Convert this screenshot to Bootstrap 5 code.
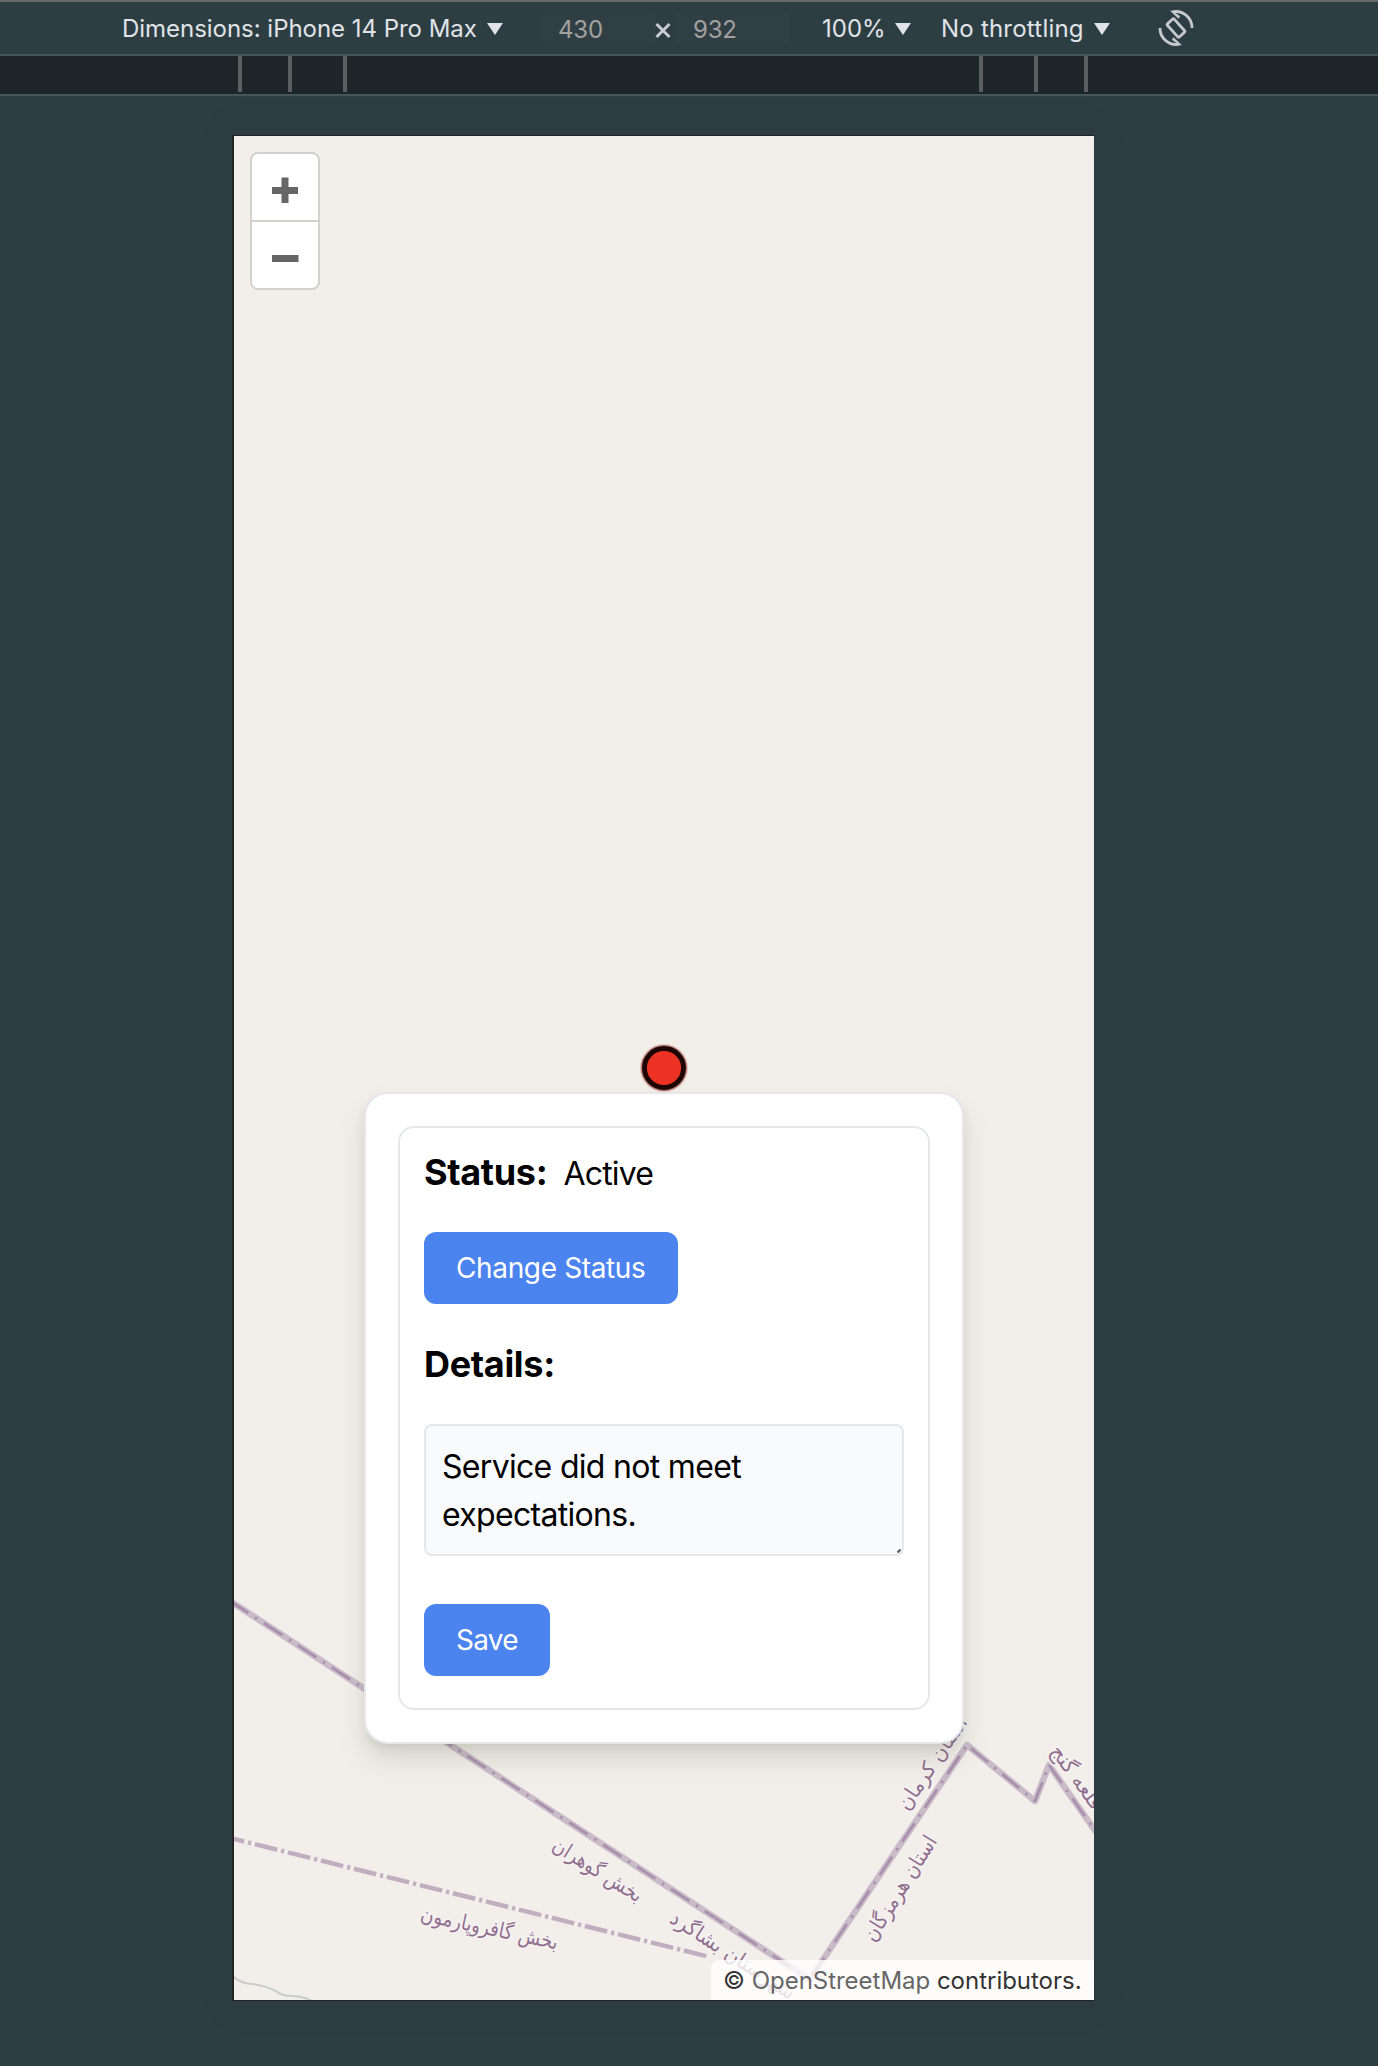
<!DOCTYPE html>
<html lang="en">
<head>
<meta charset="utf-8">
<title>Device preview</title>
<link rel="stylesheet" href="https://cdn.jsdelivr.net/npm/bootstrap@5.3.0/dist/css/bootstrap.min.css">
<style>
body{background:#2d3e43;font-family:Inter,"Liberation Sans",sans-serif;color:#000;height:2066px;overflow:hidden}
.devbar{height:56px;border-top:2px solid #686868;border-bottom:2px solid #45565a;font-size:24px;line-height:52px;color:#e0e3e7;white-space:nowrap}
.devbar div{padding-top:2px}
.caret{width:16px;height:12px;display:block;margin-top:2px}
.t-dim{margin-left:122px;width:365px;letter-spacing:-.03px}
.size-input{width:114px;height:34px;line-height:33px;background:#303f43;color:#a3a1a0;border-radius:6px;letter-spacing:-.2px}
.s-a{margin-left:39px;padding-left:16px}
.s-b{margin-left:5px;padding-left:17px}
.t-x{width:16px;height:17px;margin:5px 0 0 -1px}
.t-zoom{margin-left:31px;padding-left:1px;width:74px}
.t-thr{margin-left:30px;width:153px;letter-spacing:.22px}
.t-rot{margin-left:46px}
.ruler{height:40px;background:#1f2629;border-bottom:2px solid #45565a}
.tick{width:4px;height:36px;background:#5b5f60}
.gap-a{margin-left:46px}
.gap-b{margin-left:51px}
.tick-first{margin-left:238px}
.tick-mid{margin-left:632px}
.device{margin:39px 0 0 232px;width:862px;height:1866px;border:1px solid #232323;border-left-width:2px;border-right:0;background:#f2efea;box-shadow:0 0 30px rgba(48,52,56,.3)}
.zoomer{left:16px;top:16px;width:70px;height:138px;background:#fff;border:2px solid #d3d0cd;border-radius:8px}
.zoomer .zb{height:66px;padding-top:5px}
.zoomer .zb + .zb{border-top:2px solid #d3d0cd;height:68px}
.popbox{left:130px;top:956px;width:600px;height:652px;border:2px solid #e5e7eb;border-radius:24px;padding:32px;background:#fff;box-shadow:0 16px 26px rgba(90,92,72,.17),0 6px 12px -4px rgba(90,92,72,.16)}
.inner{border:2px solid #e5e7eb;border-radius:16px;padding:16px 24px 32px}
.ttl{font-size:36px;line-height:56px;font-weight:700;letter-spacing:-.32px}
.val{font-size:32px;line-height:60px;height:56px;margin-left:16px;letter-spacing:-.8px}
.act{--bs-btn-bg:#4b83ef;--bs-btn-border-color:#4b83ef;--bs-btn-color:#fff;height:72px;border:0;border-radius:12px;padding:0 32px;font-size:28px;line-height:72px;display:block;text-align:left;white-space:nowrap}
.act-status{width:254px;margin:32px 0;letter-spacing:-.36px}
.act-save{width:126px;margin-top:48px;letter-spacing:-.75px}
.note{width:480px;height:132px;border:2px solid #e5e7eb;border-radius:8px;background:#f9fafc;padding:17px 16px 15px;font-size:32px;line-height:48px;letter-spacing:-.69px;color:#000;resize:none;overflow:hidden;display:block}
.grip{right:3px;bottom:3px}
.attrib{right:0;bottom:0;width:383px;height:40px;line-height:42px;padding-left:12px;background:rgba(255,255,255,.8);border-top-left-radius:8px;font-size:24px;letter-spacing:-.02px;color:#333;white-space:nowrap}
.attrib a{color:#666;text-decoration:none}
.names text{font-family:"DejaVu Sans",sans-serif;font-size:21px;fill:#91708f;stroke:#f6f2f2;stroke-width:3px;paint-order:stroke;text-anchor:middle}
</style>
</head>
<body>
<header class="devbar d-flex align-items-center">
  <div class="t-dim">Dimensions: iPhone 14 Pro Max</div>
  <svg class="caret" viewBox="0 0 16 12"><path d="M0 0H16L8 12Z" fill="#e0e3e7"/></svg>
  <div class="size-input s-a">430</div>
  <svg class="t-x" viewBox="0 0 16 17"><path d="M1.500 2L14.500 15M14.500 2L1.500 15" stroke="#c9ccd1" stroke-width="3"/></svg>
  <div class="size-input s-b">932</div>
  <div class="t-zoom">100%</div>
  <svg class="caret" viewBox="0 0 16 12"><path d="M0 0H16L8 12Z" fill="#e0e3e7"/></svg>
  <div class="t-thr">No throttling</div>
  <svg class="caret" viewBox="0 0 16 12"><path d="M0 0H16L8 12Z" fill="#e0e3e7"/></svg>
  <svg class="t-rot" width="40" height="40" viewBox="-20 -20 40 40" fill="none" stroke="#c5c9cd" stroke-width="2.800"><rect x="-4.600" y="-8.800" width="9.200" height="17.600" rx="1" transform="rotate(-42)"/><path d="M-3 -16.200A16.200 16.200 0 0 1 16 0"/><path d="M3 16.200A16.200 16.200 0 0 1 -16 0"/><path d="M-6 -17.200L1 -17.600L-.5 -15L4.200 -11.800L2.500 -9.200Z M6 17.200L-1 17.600L.5 15L-4.200 11.800L-2.500 9.200Z" fill="#c5c9cd" stroke="none"/></svg>
</header>
<div class="ruler d-flex">
  <div class="tick tick-first"></div><div class="tick gap-a"></div><div class="tick gap-b"></div>
  <div class="tick tick-mid"></div><div class="tick gap-b"></div><div class="tick gap-a"></div>
</div>
<main class="device position-relative">
  <svg class="position-absolute top-0 start-0" width="860" height="1864" viewBox="234 136 860 1864">
    <g fill="none" stroke-linejoin="round">
      <path d="M230 1601L812 1981" stroke="#cabbc9" stroke-width="6.500"/>
      <path d="M230 1601L812 1981" stroke="#a98dac" stroke-width="2.600" stroke-dasharray="22 8 2.500 8"/>
      <path d="M812 1976L967 1745L1035 1801L1049 1765L1096 1832" stroke="#cabbc9" stroke-width="6.500"/>
      <path d="M812 1976L967 1745L1035 1801L1049 1765L1096 1832" stroke="#a98dac" stroke-width="2.600" stroke-dasharray="22 8 2.500 8"/>
      <path d="M234 1839L710 1957" stroke="#c1aec1" stroke-width="4.500" stroke-dasharray="23 4 3.200 3.800" stroke-dashoffset="12.500"/>
      <path d="M234 1977Q240 1983 252 1984T276 1991Q281 1996 292 1996T312 2001" stroke="#c9cdca" stroke-width="2"/>
    </g>
    <g class="names" direction="rtl">
      <text transform="translate(594 1876) rotate(32)" textLength="102" lengthAdjust="spacingAndGlyphs">بخش گوهران</text>
      <text transform="translate(488 1935) rotate(12)" textLength="140" lengthAdjust="spacingAndGlyphs">بخش گافروپارمون</text>
      <text transform="translate(729 1961) rotate(33)" textLength="144" lengthAdjust="spacingAndGlyphs">شهرستان بشاگرد</text>
      <text transform="translate(938 1767) rotate(-56)" textLength="108" lengthAdjust="spacingAndGlyphs">استان کرمان</text>
      <text transform="translate(906 1892) rotate(-58)" textLength="120" lengthAdjust="spacingAndGlyphs">استان هرمزگان</text>
      <text transform="translate(1098 1818) rotate(54)" textLength="165" lengthAdjust="spacingAndGlyphs">شهرستان قلعه گنج</text>
    </g>
    <circle cx="664" cy="1068" r="24" fill="#c0665c" opacity=".35"/>
    <circle cx="664" cy="1068" r="23" fill="#7a2a22" opacity=".5"/>
    <circle cx="664" cy="1068" r="19.500" fill="#ec3323" stroke="#1d0503" stroke-width="4.800"/>
  </svg>
  <div class="zoomer position-absolute overflow-hidden">
    <div class="zb d-flex align-items-center justify-content-center"><svg width="28" height="28" viewBox="0 0 28 28"><path d="M1 14.500H27M14 1.500V27" stroke="#666" stroke-width="7"/></svg></div>
    <div class="zb d-flex align-items-center justify-content-center"><svg width="28" height="28" viewBox="0 0 28 28"><path d="M1 14.500H27.500" stroke="#666" stroke-width="7"/></svg></div>
  </div>
  <section class="popbox position-absolute">
    <div class="inner">
      <div class="d-flex"><div class="ttl">Status:</div><div class="val">Active</div></div>
      <button class="btn act act-status">Change Status</button>
      <div class="ttl">Details:</div>
      <div class="position-relative mt-4 pt-2">
        <textarea class="note">Service did not meet expectations.</textarea>
        <svg class="grip position-absolute" width="4" height="4" viewBox="0 0 4 4"><path d="M.5 3.500L3.500 .5" stroke="#555" stroke-width="2"/></svg>
      </div>
      <button class="btn act act-save">Save</button>
    </div>
  </section>
  <footer class="attrib position-absolute">© <a href="#">OpenStreetMap</a> contributors.</footer>
</main>
<script src="https://cdn.jsdelivr.net/npm/bootstrap@5.3.0/dist/js/bootstrap.bundle.min.js"></script>
</body>
</html>
